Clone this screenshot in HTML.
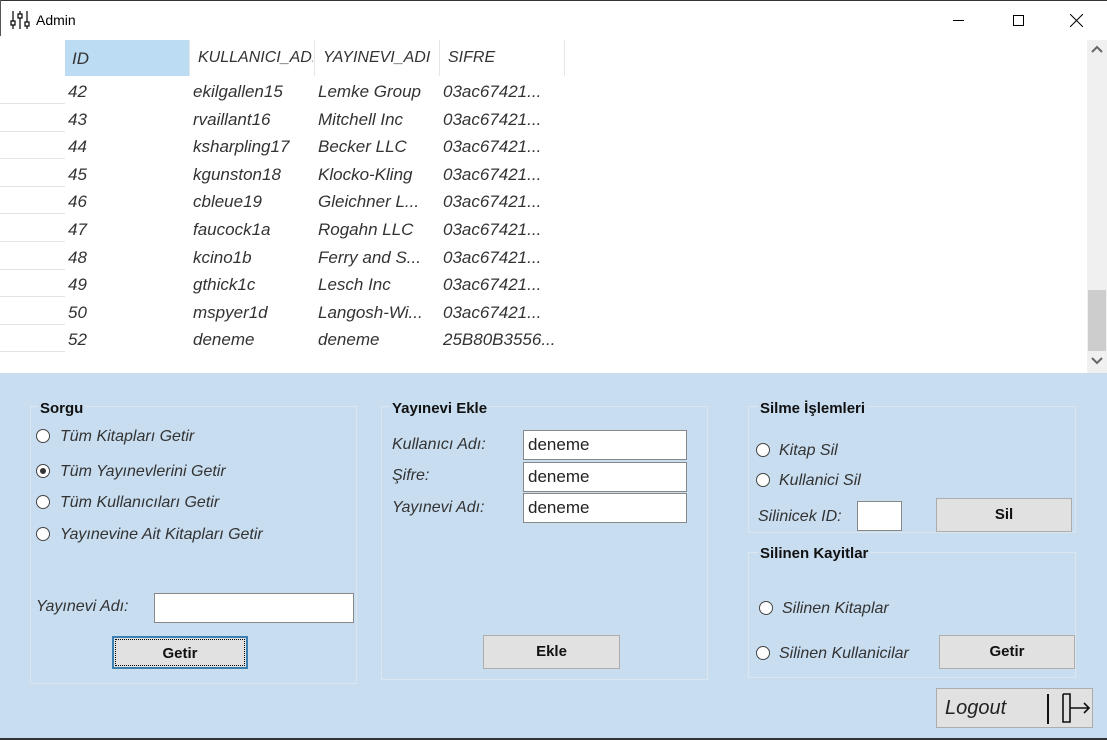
<!DOCTYPE html>
<html><head><meta charset="utf-8"><style>
*{margin:0;padding:0;box-sizing:border-box}
body{width:1107px;height:740px;position:relative;overflow:hidden;background:#fff;font-family:"Liberation Sans","DejaVu Sans",sans-serif;color:#222}
.a{position:absolute}
.t{position:absolute;font-size:16px;font-style:italic;color:#333;white-space:nowrap}
.b{position:absolute;font-size:15px;font-weight:bold;color:#111;white-space:nowrap}
.grp{position:absolute;border:1px solid #dde6ef}
.r{position:absolute;width:14px;height:14px;border:1px solid #444;border-radius:50%;background:#fff}
.r.on::after{content:"";position:absolute;left:3px;top:3px;width:6px;height:6px;border-radius:50%;background:#333}
.in{position:absolute;background:#fff;border:1px solid #888;font-size:17px;padding:0 4px;line-height:28px;color:#222}
.btn{position:absolute;background:#e1e1e1;border:1px solid #adadad;font-weight:bold;font-size:15px;text-align:center;color:#111}
.cell{position:absolute;font-size:16px;font-style:italic;color:#333;white-space:nowrap}
</style></head><body>
<div class="a" style="left:0;top:0;width:1107px;height:1px;background:#333"></div>
<div class="a" style="left:0;top:0;width:1px;height:36px;background:#555"></div>
<div class="a" style="left:0;top:738px;width:1107px;height:2px;background:#333"></div>
<!-- title -->
<svg class="a" style="left:10px;top:10px" width="22" height="20" viewBox="0 0 22 20"><g stroke="#000" fill="none" stroke-width="1.2"><path d="M3 1v18M10 1v18M17 1v18"/><rect x="1" y="11" width="4" height="4" fill="#fff"/><rect x="8" y="4" width="4" height="4" fill="#fff"/><rect x="15" y="12" width="4" height="4" fill="#fff"/></g></svg>
<div class="a" style="left:36px;top:12px;font-size:14px;color:#000">Admin</div>
<div class="a" style="left:953px;top:20px;width:11px;height:1px;background:#000"></div>
<div class="a" style="left:1013px;top:15px;width:11px;height:11px;border:1px solid #000"></div>
<svg class="a" style="left:1070px;top:14px" width="13" height="13"><path d="M0 0L13 13M13 0L0 13" stroke="#000"/></svg>
<!-- grid -->
<div class="a" style="left:65px;top:40px;width:125px;height:36px;background:#bcdcf4"></div>
<div class="a" style="left:189px;top:40px;width:1px;height:36px;background:#e6e6e6"></div>
<div class="a" style="left:314px;top:40px;width:1px;height:36px;background:#e6e6e6"></div>
<div class="a" style="left:439px;top:40px;width:1px;height:36px;background:#e6e6e6"></div>
<div class="a" style="left:564px;top:40px;width:1px;height:36px;background:#e6e6e6"></div>
<div class="cell" style="left:72px;top:49px;font-size:17px">ID</div>
<div class="cell" style="left:198px;top:49px;width:115px;overflow:hidden">KULLANICI_ADI</div>
<div class="cell" style="left:323px;top:49px;width:115px;overflow:hidden">YAYINEVI_ADI</div>
<div class="cell" style="left:448px;top:49px">SIFRE</div>
<div id="rows"></div>
<script>
var d=[["42","ekilgallen15","Lemke Group"],["43","rvaillant16","Mitchell Inc"],["44","ksharpling17","Becker LLC"],["45","kgunston18","Klocko-Kling"],["46","cbleue19","Gleichner L..."],["47","faucock1a","Rogahn LLC"],["48","kcino1b","Ferry and S..."],["49","gthick1c","Lesch Inc"],["50","mspyer1d","Langosh-Wi..."],["52","deneme","deneme"]];
var h="";d.forEach(function(r,i){var y=82+i*27.6;var s=i==9?"25B80B3556...":"03ac67421...";
h+='<div class="cell" style="left:68px;top:'+y+'px;font-size:17px">'+r[0]+'</div><div class="cell" style="left:193px;top:'+y+'px;font-size:17px">'+r[1]+'</div><div class="cell" style="left:318px;top:'+y+'px;font-size:17px">'+r[2]+'</div><div class="cell" style="left:443px;top:'+y+'px;font-size:17px">'+s+'</div><div class="a" style="left:0;top:'+(y+21)+'px;width:65px;height:1px;background:#e3e3e3"></div>';});
document.getElementById("rows").innerHTML=h;
</script>
<!-- scrollbar -->
<div class="a" style="left:1087px;top:40px;width:20px;height:333px;background:#f0f0f0"></div>
<div class="a" style="left:1088px;top:290px;width:18px;height:61px;background:#cdcdcd"></div>
<svg class="a" style="left:1091px;top:357px" width="12" height="8"><path d="M1 1l5 5 5-5" stroke="#666" stroke-width="2" fill="none"/></svg>
<svg class="a" style="left:1091px;top:45px" width="12" height="8"><path d="M1 7l5-5 5 5" stroke="#666" stroke-width="2" fill="none"/></svg>
<!-- panel -->
<div class="a" style="left:0;top:373px;width:1107px;height:365px;background:#c8ddf0"></div>
<!-- Sorgu -->
<div class="grp" style="left:30px;top:406px;width:327px;height:278px"></div>
<div class="b" style="left:38px;top:400px;background:#c8ddf0;padding:0 2px">Sorgu</div>
<div class="r" style="left:36px;top:429px"></div><div class="t" style="left:60px;top:428px">Tüm Kitapları Getir</div>
<div class="r on" style="left:36px;top:464px"></div><div class="t" style="left:60px;top:463px">Tüm Yayınevlerini Getir</div>
<div class="r" style="left:36px;top:495px"></div><div class="t" style="left:60px;top:494px">Tüm Kullanıcıları Getir</div>
<div class="r" style="left:36px;top:527px"></div><div class="t" style="left:60px;top:526px">Yayınevine Ait Kitapları Getir</div>
<div class="t" style="left:36px;top:598px">Yayınevi Adı:</div>
<div class="in" style="left:154px;top:593px;width:200px;height:30px"></div>
<div class="btn" style="left:112px;top:636px;width:136px;height:33px;line-height:31px;border:2px solid #3c7fb1;outline:1px dotted #000;outline-offset:-4px">Getir</div>
<!-- Yayinevi Ekle -->
<div class="grp" style="left:381px;top:406px;width:327px;height:274px"></div>
<div class="b" style="left:390px;top:400px;background:#c8ddf0;padding:0 2px">Yayınevi Ekle</div>
<div class="t" style="left:392px;top:436px">Kullanıcı Adı:</div>
<div class="t" style="left:392px;top:467px">Şifre:</div>
<div class="t" style="left:392px;top:499px">Yayınevi Adı:</div>
<div class="in" style="left:523px;top:430px;width:164px;height:30px">deneme</div>
<div class="in" style="left:523px;top:462px;width:164px;height:30px">deneme</div>
<div class="in" style="left:523px;top:493px;width:164px;height:30px">deneme</div>
<div class="btn" style="left:483px;top:635px;width:137px;height:34px;line-height:32px">Ekle</div>
<!-- Silme -->
<div class="grp" style="left:748px;top:406px;width:328px;height:127px"></div>
<div class="b" style="left:758px;top:400px;background:#c8ddf0;padding:0 2px">Silme İşlemleri</div>
<div class="r" style="left:756px;top:443px"></div><div class="t" style="left:779px;top:442px">Kitap Sil</div>
<div class="r" style="left:756px;top:473px"></div><div class="t" style="left:779px;top:472px">Kullanici Sil</div>
<div class="t" style="left:758px;top:508px">Silinicek ID:</div>
<div class="in" style="left:857px;top:501px;width:45px;height:30px"></div>
<div class="btn" style="left:936px;top:498px;width:136px;height:34px;line-height:32px">Sil</div>
<div class="grp" style="left:748px;top:552px;width:328px;height:126px"></div>
<div class="b" style="left:758px;top:545px;background:#c8ddf0;padding:0 2px">Silinen Kayitlar</div>
<div class="r" style="left:759px;top:601px"></div><div class="t" style="left:782px;top:600px">Silinen Kitaplar</div>
<div class="r" style="left:756px;top:646px"></div><div class="t" style="left:779px;top:645px">Silinen Kullanicilar</div>
<div class="btn" style="left:939px;top:635px;width:136px;height:34px;line-height:32px">Getir</div>
<!-- Logout -->
<div class="btn" style="left:936px;top:688px;width:157px;height:40px;font-weight:normal;font-style:italic;font-size:20px;text-align:left;padding-left:8px;line-height:38px;color:#222">Logout</div>
<svg class="a" style="left:1044px;top:690px" width="50" height="36"><g stroke="#111" fill="none" stroke-width="2"><path d="M4 4v30"/><path d="M19 4h7v28h-7v-4M19 4v26" stroke-width="1.6"/><path d="M26 18h19M40 13l5 5-5 5" stroke-width="1.6"/></g></svg>
</body></html>
